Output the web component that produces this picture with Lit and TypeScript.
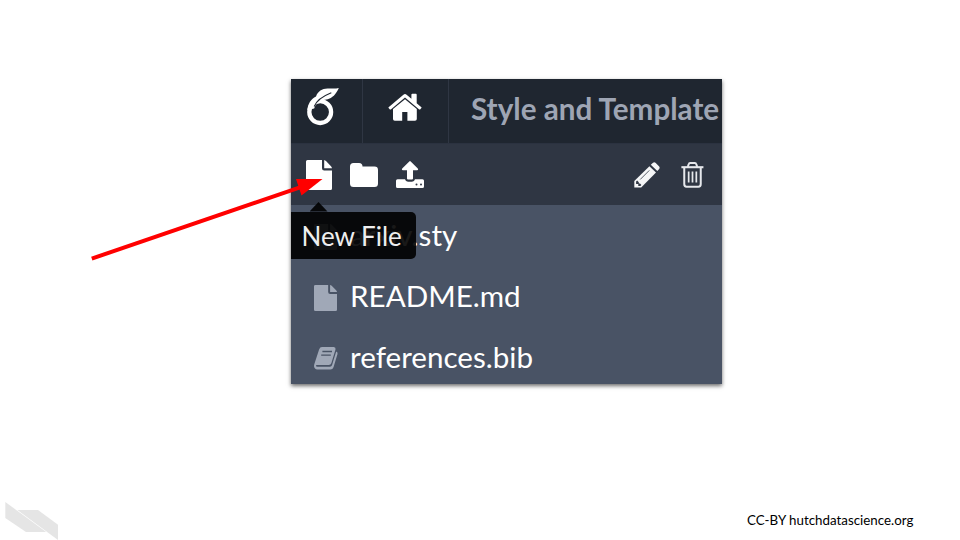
import { LitElement, html, css, svg } from "lit";
import { customElement, property } from "lit/decorators.js";

const page = svg`<path d="M1.5 0H16V8.2Q16 10.4 18.2 10.4H26V28.5Q26 30 24.5 30H1.5Q0 30 0 28.5V1.5Q0 0 1.5 0Z"/><path d="M18.2 0Q19.2 .3 20 1L25 6.2Q25.8 7 26 8.2H18.2Z"/>`;

const icons: Record<string, { box: string; art: unknown }> = {
  logo: {
    box: "0 0 32 38",
    art: svg`<circle cx="13.2" cy="24.1" r="10.9" fill="none" stroke="currentColor" stroke-width="4.3"/>
      <path d="M.4 22C.8 15.5 4 11 9 8.4C11 3.4 15 .8 20.5 .6C24.5 .4 28.5 1 31.8 0C29.8 4.6 27.2 8.6 22 10.8C18.8 12.2 14.6 11.6 11.4 14C9 15.8 8 18 7.2 20.4Z"/>
      <path d="M7.2 18.5C9.2 12.9 15.5 8.2 24.3 4.7" fill="none" stroke="#1f2630" stroke-width="1.1"/>`,
  },
  home: {
    box: "0 0 34 29",
    art: svg`<path d="M17 6.2L28.8 16V26Q28.8 27.8 27 27.8H19.4V19H14.2V27.8H6.8Q5 27.8 5 26V16Z"/>
      <path d="M.6 14.2L15.4 1.7Q17 .5 18.6 1.7L23.4 5.7V1.7Q23.4 .8 24.3 .8H27.9Q28.7 .8 28.7 1.7V10.2L33.4 14.2Q33.8 14.6 33.4 15L32.1 16.4Q31.7 16.8 31.2 16.4L17 4.6L2.8 16.4Q2.3 16.8 1.9 16.4L.6 15Q.2 14.6 .6 14.2Z"/>`,
  },
  file: { box: "0 0 26 30", art: page },
  folder: {
    box: "0 0 28 24",
    art: svg`<path d="M3.5 0H9Q12.5 0 12.5 3.6H24.5Q28 3.6 28 7V20.5Q28 24 24.5 24H3.5Q0 24 0 20.5V3.5Q0 0 3.5 0Z"/>`,
  },
  upload: {
    box: "0 0 28 28",
    art: svg`<path d="M13.3 .4Q14 -.2 14.7 .4L21.8 7.6Q22.8 9 21.2 9.3H17V17.5Q17 18.5 16 18.5H12Q11 18.5 11 17.5V9.3H6.8Q5.2 9 6.2 7.6Z"/>
      <path d="M1.5 18.3H9Q9.5 20.7 12 20.7H16Q18.5 20.7 19 18.3H26.5Q28 18.3 28 19.8V25.5Q28 27 26.5 27H1.5Q0 27 0 25.5V19.8Q0 18.3 1.5 18.3Z"/>
      <circle cx="20.5" cy="23.5" r="1" fill="#2f3643"/><circle cx="25" cy="23.5" r="1" fill="#2f3643"/>`,
  },
  pencil: {
    box: "0 0 26 26",
    art: svg`<path d="M15.4 4.2L22 10.6L7.2 25.6H.3V19Z"/>
      <path d="M16.8 2.8L19 .8Q20.2 -.3 21.5 .8L25.2 4.6Q26.2 5.8 25.2 7L23.3 9.1Z"/>
      <path d="M6.2 17.5L15.3 8.4" fill="none" stroke="#2f3643" stroke-width=".8"/>
      <path d="M3.2 18.5L4.8 20.2V21.4H6L7.4 23L6.3 24.1H4.3V22H2.1V19.6Z" fill="#2f3643"/>`,
  },
  trash: {
    box: "0 0 24 26",
    art: svg`<g fill="none" stroke="currentColor" stroke-width="2.1" stroke-linejoin="round"><path d="M.4 5.2H23.4"/>
      <path d="M7 5L8.1 2Q8.4 1 9.5 1H14.5Q15.6 1 15.9 2L17 5"/><path d="M3.4 5.5V22Q3.4 24.7 5.8 24.7H18.2Q20.6 24.7 20.6 22V5.5"/>
      <path d="M8 9.5V20.5M12 9.5V20.5M16 9.5V20.5" stroke-width="1.8"/></g>`,
  },
  book: {
    box: "0 0 24 23",
    art: svg`<path d="M8 0H19.8Q22 .2 21.5 2.4L17.4 16Q16.8 17.9 14.8 17.9H3Q1.7 18 1.9 19.1Q2.2 19.8 3.4 19.8H16Q17.5 19.7 18 18.3L22.2 4.5Q24 5.2 23.5 7L19.5 20.2Q18.7 22.4 16.4 22.4H3.3Q.4 22.2 0 19.2Q0 17.5 .6 16.2L5.1 2.4Q6 0 8 0Z"/>
      <path d="M8.4 4.5H18M7.2 8.2H16.8" stroke="#495365" stroke-width="1.3"/>`,
  },
};

@customElement("ui-icon")
class UiIcon extends LitElement {
  @property() name = "file";
  static styles = css`
    :host { display: block; flex: none; }
    svg { display: block; width: 100%; height: 100%; fill: currentColor; overflow: visible; }
  `;
  render() {
    const icon = icons[this.name];
    return html`<svg viewBox=${icon.box} preserveAspectRatio="none">${icon.art}</svg>`;
  }
}

@customElement("app-root")
class AppRoot extends LitElement {
  static styles = css`
    :host { display: block; font-family: Lato, sans-serif; }
    * { box-sizing: border-box; }
    .slide { position: relative; width: 960px; height: 540px; overflow: hidden; background: #fff; padding: 79px 0 0 291px; }
    .panel { position: relative; width: 430.5px; height: 305px; background: #495365; box-shadow: 0 1.5px 4px rgba(0,0,0,.58); }
    .clip { height: 100%; overflow: hidden; }
    .top { display: flex; height: 65px; background: #1f2630; border-bottom: 1px solid #2b3240; }
    .cell { border-right: 1px solid #2f3643; flex: none; }
    .brand { width: 71.5px; padding: 9px 0 0 16px; }
    .house { width: 86px; padding: 13.5px 0 0 25.5px; }
    .logo { width: 32px; height: 38px; color: #fff; }
    .home { width: 34px; height: 29px; color: #fff; }
    .title { font-size: 29.65px; font-weight: 700; line-height: 60px; color: #9ea5b4; padding-left: 22.5px; white-space: nowrap; }
    .tools { display: flex; height: 61px; background: #2f3643; padding: 0 18px 0 14.5px; color: #fff; align-items: center; }
    .new { width: 26px; height: 30px; margin-right: 18.5px; }
    .folder { width: 28px; height: 24px; margin-right: 18px; }
    .upload { width: 28px; height: 28px; }
    .pencil { width: 26px; height: 26px; margin-left: auto; margin-right: 20.5px; color: #f5f6f7; }
    .trash { width: 23px; height: 26px; color: #e6e8ec; }
    .row { display: flex; align-items: center; height: 61px; padding-left: 23px; color: #fff; font-size: 29.6px; line-height: 58px; white-space: nowrap; }
    .row span { padding-bottom: 2px; }
    .glyph { width: 23px; height: 26px; margin-right: 13px; margin-top: 3px; color: #a0a8b7; }
    .glyph.book { width: 24px; height: 23px; margin-right: 12px; margin-top: 2px; }
    .tip { position: absolute; left: 0; top: 132.5px; width: 125px; height: 47.5px; border-radius: 0 5px 5px 0; background: rgba(0,0,0,.9); color: #eee; font-size: 26px; line-height: 48px; padding-left: 10.5px; white-space: nowrap; }
    .tip::before { content: ""; position: absolute; left: 18.5px; top: -9.5px; width: 18px; height: 9.5px; background: rgba(0,0,0,.9); clip-path: polygon(50% 0, 100% 100%, 0 100%); }
    .arrow { position: absolute; left: 0; top: 0; width: 960px; height: 540px; }
    .mark { position: absolute; left: 5px; top: 502px; width: 53px; height: 38px; fill: #e5e5e5; }
    .credit { position: absolute; left: 747px; top: 512px; font-size: 13.33px; line-height: 16px; color: #000; white-space: nowrap; }
  `;

  render() {
    const rows = [["file", "arxiv.sty"], ["file", "README.md"], ["book", "references.bib"]];
    return html`<main class="slide">
      <section class="panel">
        <div class="clip">
          <header class="top">
            <div class="cell brand"><ui-icon class="logo" name="logo"></ui-icon></div>
            <div class="cell house"><ui-icon class="home" name="home"></ui-icon></div>
            <div class="title">Style and Template</div>
          </header>
          <nav class="tools">
            <ui-icon class="new" name="file"></ui-icon>
            <ui-icon class="folder" name="folder"></ui-icon>
            <ui-icon class="upload" name="upload"></ui-icon>
            <ui-icon class="pencil" name="pencil"></ui-icon>
            <ui-icon class="trash" name="trash"></ui-icon>
          </nav>
          ${rows.map(([kind, name]) => html`<div class="row"><ui-icon class="glyph ${kind}" name=${kind}></ui-icon><span>${name}</span></div>`)}
        </div>
        <div class="tip">New File</div>
      </section>
      <svg class="arrow" viewBox="0 0 960 540"><path d="M91.8 258.6L300 187.3" stroke="#f00" stroke-width="4"/><path d="M322.5 179L296 179L301.5 195.5Z" fill="#f00"/></svg>
      <svg class="mark" viewBox="0 0 53 38"><path d="M.3 0V16L21 30H41.2Z"/><path d="M12.4 8H33L53 22.8V38Z"/></svg>
      <footer class="credit">CC-BY hutchdatascience.org</footer>
    </main>`;
  }
}
